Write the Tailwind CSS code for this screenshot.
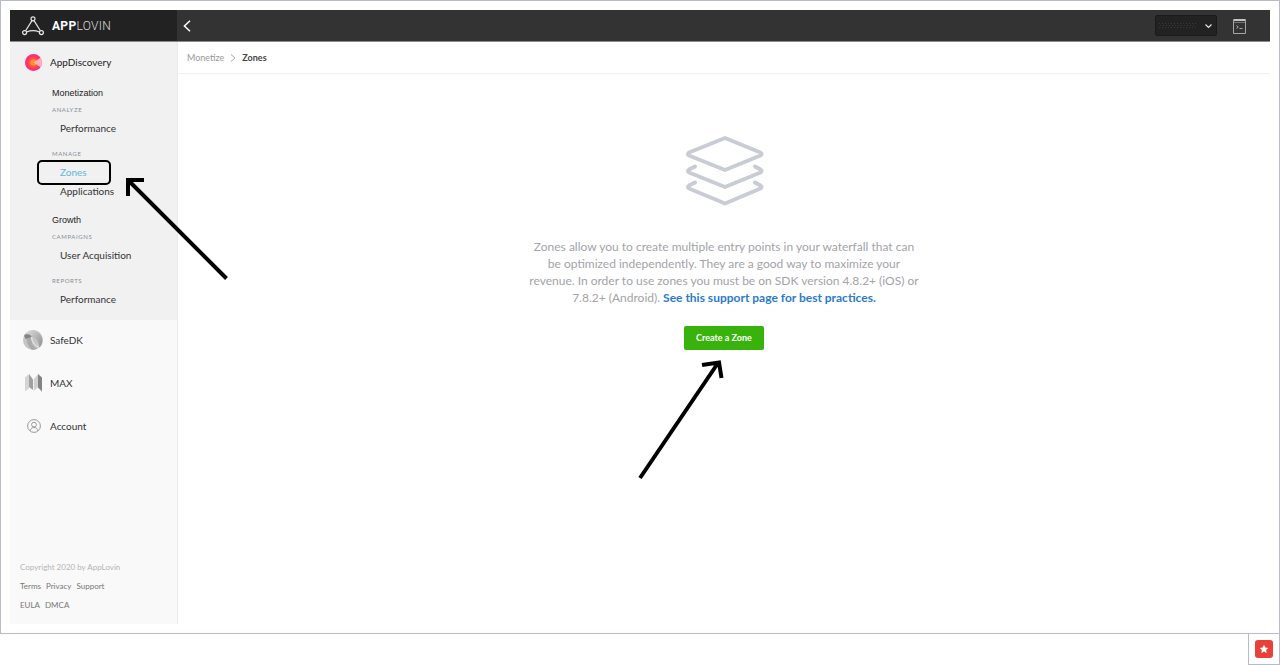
<!DOCTYPE html>
<html lang="en">
<head>
  <meta charset="UTF-8" />
  <meta name="viewport" content="width=device-width, initial-scale=1" />
  <title>AppLovin - Zones</title>
  <script src="https://cdn.jsdelivr.net/npm/@tailwindcss/browser@4"></script>
</head>
<body class="relative min-h-screen flex flex-col bg-white font-['Lato',sans-serif] text-[#333333]">

  <div class="flex-1 flex flex-col border border-[#b8bcca] p-[9px]">

    <!-- Top bar -->
    <header class="flex h-8 bg-[#333333] border-b border-[#8a8a8a] text-white">
      <a href="#" class="w-[167px] shrink-0 bg-[#222222] flex items-center gap-2 pl-3">
        <svg class="w-[22px] h-5" viewBox="0 0 22 20" fill="none" stroke="#e6e6e6" stroke-width="1.2">
          <circle cx="11" cy="2.8" r="2" />
          <circle cx="2.6" cy="16.6" r="2" />
          <circle cx="19.4" cy="16.6" r="2" />
          <path d="M10 4.6 3.6 14.8M12 4.6l6.4 10.2M4.6 16q6.4-2.6 12.8 0" />
        </svg>
        <span class="font-['Roboto',sans-serif] text-xs tracking-wide text-[#dddddd] font-light"><b class="font-bold text-white">APP</b>LOVIN</span>
      </a>
      <button class="px-[6px]" aria-label="Collapse menu">
        <svg class="w-2 h-3" viewBox="0 0 8 12" fill="none" stroke="white" stroke-width="1.5"><path d="M7 .7 1.4 6 7 11.3" /></svg>
      </button>
      <div class="ml-auto flex items-center gap-4 pr-6">
        <div class="relative">
          <select aria-label="Account" class="block appearance-none w-[62px] h-[21px] rounded-xs border border-[#1a1a1a] bg-[#222222] text-[10px]">
            <option></option>
          </select>
          <svg class="absolute inset-0 w-full h-full pointer-events-none" viewBox="0 0 62 21" fill="none">
            <path d="M4 8.500h37M4 12.500h37" stroke="#393939" stroke-dasharray="1 2" />
            <path d="M5 10.500h36" stroke="#393939" stroke-dasharray="1 2" />
            <path d="m50.500 9.500 3 3 3-3" stroke="#e5e5e5" stroke-width="1.200" />
          </svg>
        </div>
        <button aria-label="Developer console">
          <svg class="w-[13px] h-4" viewBox="0 0 13 16" fill="none" stroke="#a5a5a5">
            <path d="M.5 1.500h12v14H.5z" />
            <path d="M1 2h11" stroke="#c4c4c4" stroke-width="2" />
            <path d="M1 4.500h11" stroke="#777777" />
            <path d="m3.500 7.500 1.800 1.500-1.800 1.500M6.500 10.500h3" />
          </svg>
        </button>
      </div>
    </header>

    <div class="flex-1 flex">

      <!-- Sidebar -->
      <aside class="w-[168px] shrink-0 flex flex-col bg-[#f9f9f9] border-r border-[#ebebeb]">
        <nav class="flex flex-col gap-[3px] text-[10px]">
          <div class="bg-[#f1f1f1] pb-[11px]">
            <a href="#" class="flex items-center gap-2 h-10 pl-[15px] text-[#222222]">
              <svg class="w-[17px] h-[17px]" viewBox="0 0 17 17">
                <circle cx="8.500" cy="8.500" r="8.500" fill="#fb3173" />
                <circle cx="8.500" cy="8.500" r="5.700" fill="#fd4f50" />
                <circle cx="8.500" cy="8.500" r="3.200" fill="#ff9320" />
                <path d="M8.500 8.500 15.500 3.700a8.500 8.500 0 0 1 0 9.600z" fill="#fdaebb" />
              </svg>
              AppDiscovery
            </a>
            <div class="pl-[42px] mt-px">
              <h2 class="font-['Liberation_Sans',sans-serif] text-[9px] leading-5 text-[#222222]">Monetization</h2>
              <h3 class="text-[6px] leading-[14px] pb-[2px] tracking-widest text-[#858d98]">ANALYZE</h3>
              <a href="#" class="block pl-2 leading-[19px]">Performance</a>
              <h3 class="mt-[9px] text-[6px] leading-[14px] pb-[2px] tracking-widest text-[#858d98]">MANAGE</h3>
              <a href="#" class="block pl-2 leading-[19px] text-[#62b5dc]">Zones</a>
              <a href="#" class="block pl-2 leading-[19px]">Applications</a>
              <h2 class="mt-[9px] font-['Liberation_Sans',sans-serif] text-[9px] leading-5 text-[#222222]">Growth</h2>
              <h3 class="text-[6px] leading-[14px] pb-[2px] tracking-widest text-[#858d98]">CAMPAIGNS</h3>
              <a href="#" class="block pl-2 leading-[19px]">User Acquisition</a>
              <h3 class="mt-[9px] text-[6px] leading-[14px] pb-[2px] tracking-widest text-[#858d98]">REPORTS</h3>
              <a href="#" class="block pl-2 leading-[19px]">Performance</a>
            </div>
          </div>
          <a href="#" class="-mt-[3px] flex items-center gap-[7px] h-10 pl-[13px]">
            <svg class="w-5 h-5" viewBox="0 0 20 20">
              <defs>
                <linearGradient id="ball" x1="0" y1="0" x2="1" y2="1">
                  <stop offset="0" stop-color="#dddddd" />
                  <stop offset="1" stop-color="#8f8f8f" />
                </linearGradient>
              </defs>
              <circle cx="10" cy="10" r="10" fill="#c4c4c4" />
              <path d="M5 1.500A10 10 0 0 1 16.500 17.500C16 10 12 5 2.500 5z" fill="url(#ball)" />
              <path d="M1.500 4.800C6 3.500 8 5 9 7.500L3 9C1.500 7.500 1 6 1.500 4.800z" fill="#858585" />
              <path d="M8 7c0 6 2 9.500 6 11.800-2 1-4 1-5.500.7C5 16 3.500 11 4 8.500z" fill="#aaaaaa" />
              <path d="M8.500 7c.5 5 3 8 7.200 10.200" fill="none" stroke="#f1f1f1" />
            </svg>
            SafeDK
          </a>
          <a href="#" class="flex items-center gap-2 h-10 pl-[15px]">
            <svg class="w-[17px] h-[18px]" viewBox="0 0 17 18">
              <path d="M0 3.500 4 0v14.500L0 17.500z" fill="#d4d4d4" />
              <path d="m4 0 4 5.500V16l-4-3z" fill="#a0a0a0" />
              <path d="M8.800 5.500 13 0v13l-4.200 4z" fill="#d0d0d0" />
              <path d="m13 0 4 3.500v14l-4-4z" fill="#848484" />
            </svg>
            MAX
          </a>
          <a href="#" class="flex items-center gap-[9px] h-10 pl-[17px]">
            <svg class="w-[14px] h-[14px]" viewBox="0 0 14 14" fill="none" stroke="#999999">
              <circle cx="7" cy="7" r="6.400" />
              <circle cx="7" cy="5.600" r="2.400" />
              <path d="M3.300 11.800c.2-2.200 1.700-3.300 3.700-3.300s3.500 1.100 3.700 3.300" />
            </svg>
            Account
          </a>
        </nav>
        <footer class="mt-auto pl-[10px] pb-[9px] text-[8px] leading-[19px] text-[#777777]">
          <p class="text-[#b5b5b5]">Copyright 2020 by AppLovin</p>
          <div class="flex gap-[5px]"><a href="#">Terms</a><a href="#">Privacy</a><a href="#">Support</a></div>
          <div class="flex gap-[5px]"><a href="#">EULA</a><a href="#">DMCA</a></div>
        </footer>
      </aside>

      <!-- Content -->
      <main class="flex-1">
        <div class="flex items-center gap-[6px] h-8 pl-[9px] border-b border-[#f0f0f0] text-[9px]">
          <a href="#" class="text-[#999999]">Monetize</a>
          <svg class="w-[6px] h-2" viewBox="0 0 6 8" fill="none" stroke="#aaaaaa"><path d="m1 .5 4 3.500-4 3.500" /></svg>
          <span class="font-bold text-[#444444]">Zones</span>
        </div>
        <div class="flex flex-col items-center pt-[60px]">
          <svg class="w-20 h-[72px]" viewBox="0 0 80 72" fill="none" stroke="#c9ccd5" stroke-width="4" stroke-linejoin="round" stroke-linecap="round">
            <path d="M41 4 76.500 18.500Q78.500 20 76.500 21.500L41 36 5 21.500Q3 20 5 18.500z" />
            <path d="M11 32.500 5 35.500Q3 37 5 38.500L41 53 76.500 38.500Q78.500 37 76.500 35.500L71 32.500" />
            <path d="M11 48.500 5 51.500Q3 53 5 54.500L41 69.500 76.500 54.500Q78.500 53 76.500 51.500L71 48.500" />
          </svg>
          <p class="mt-8 text-center text-xs leading-[17px] text-[#a3a3a8]">
            Zones allow you to create multiple entry points in your waterfall that can<br />
            be optimized independently. They are a good way to maximize your<br />
            revenue. In order to use zones you must be on SDK version 4.8.2+ (iOS) or<br />
            7.8.2+ (Android). <a href="#" class="font-bold text-[#2a7bcc]">See this support page for best practices.</a>
          </p>
          <button class="mt-5 h-6 w-20 rounded-xs bg-[#37b30b] text-[9px] font-bold text-white">Create a Zone</button>
        </div>
      </main>
    </div>
  </div>

  <!-- Corner badge -->
  <div class="self-end -mt-px w-8 h-8 border border-[#b8bcca] flex items-center justify-center">
    <svg class="w-[18px] h-[18px]" viewBox="0 0 18 18">
      <rect width="18" height="18" rx="3" fill="#e8403a" />
      <path d="m9 4.800 1.300 2.700 3 .4-2.200 2.100.6 3L9 11.600 6.300 13l.6-3-2.200-2.100 3-.4z" fill="white" />
    </svg>
  </div>

  <!-- Annotations over the page -->
  <div class="absolute left-[37px] top-40 w-[74px] h-[25px] border-2 border-black rounded-[5px] pointer-events-none"></div>
  <svg class="absolute left-[124px] top-[176px] w-[106px] h-[106px] pointer-events-none" viewBox="0 0 106 106" fill="none" stroke="black" stroke-width="4">
    <path d="M102.500 102.500 4 4M4 20V4h16" />
  </svg>
  <svg class="absolute left-[636px] top-[358px] w-[90px] h-[124px] pointer-events-none" viewBox="0 0 90 124" fill="none" stroke="black" stroke-width="4">
    <path d="M4 120 82 5M66 7l17-2.500 2.500 15.500" />
  </svg>

</body>
</html>
